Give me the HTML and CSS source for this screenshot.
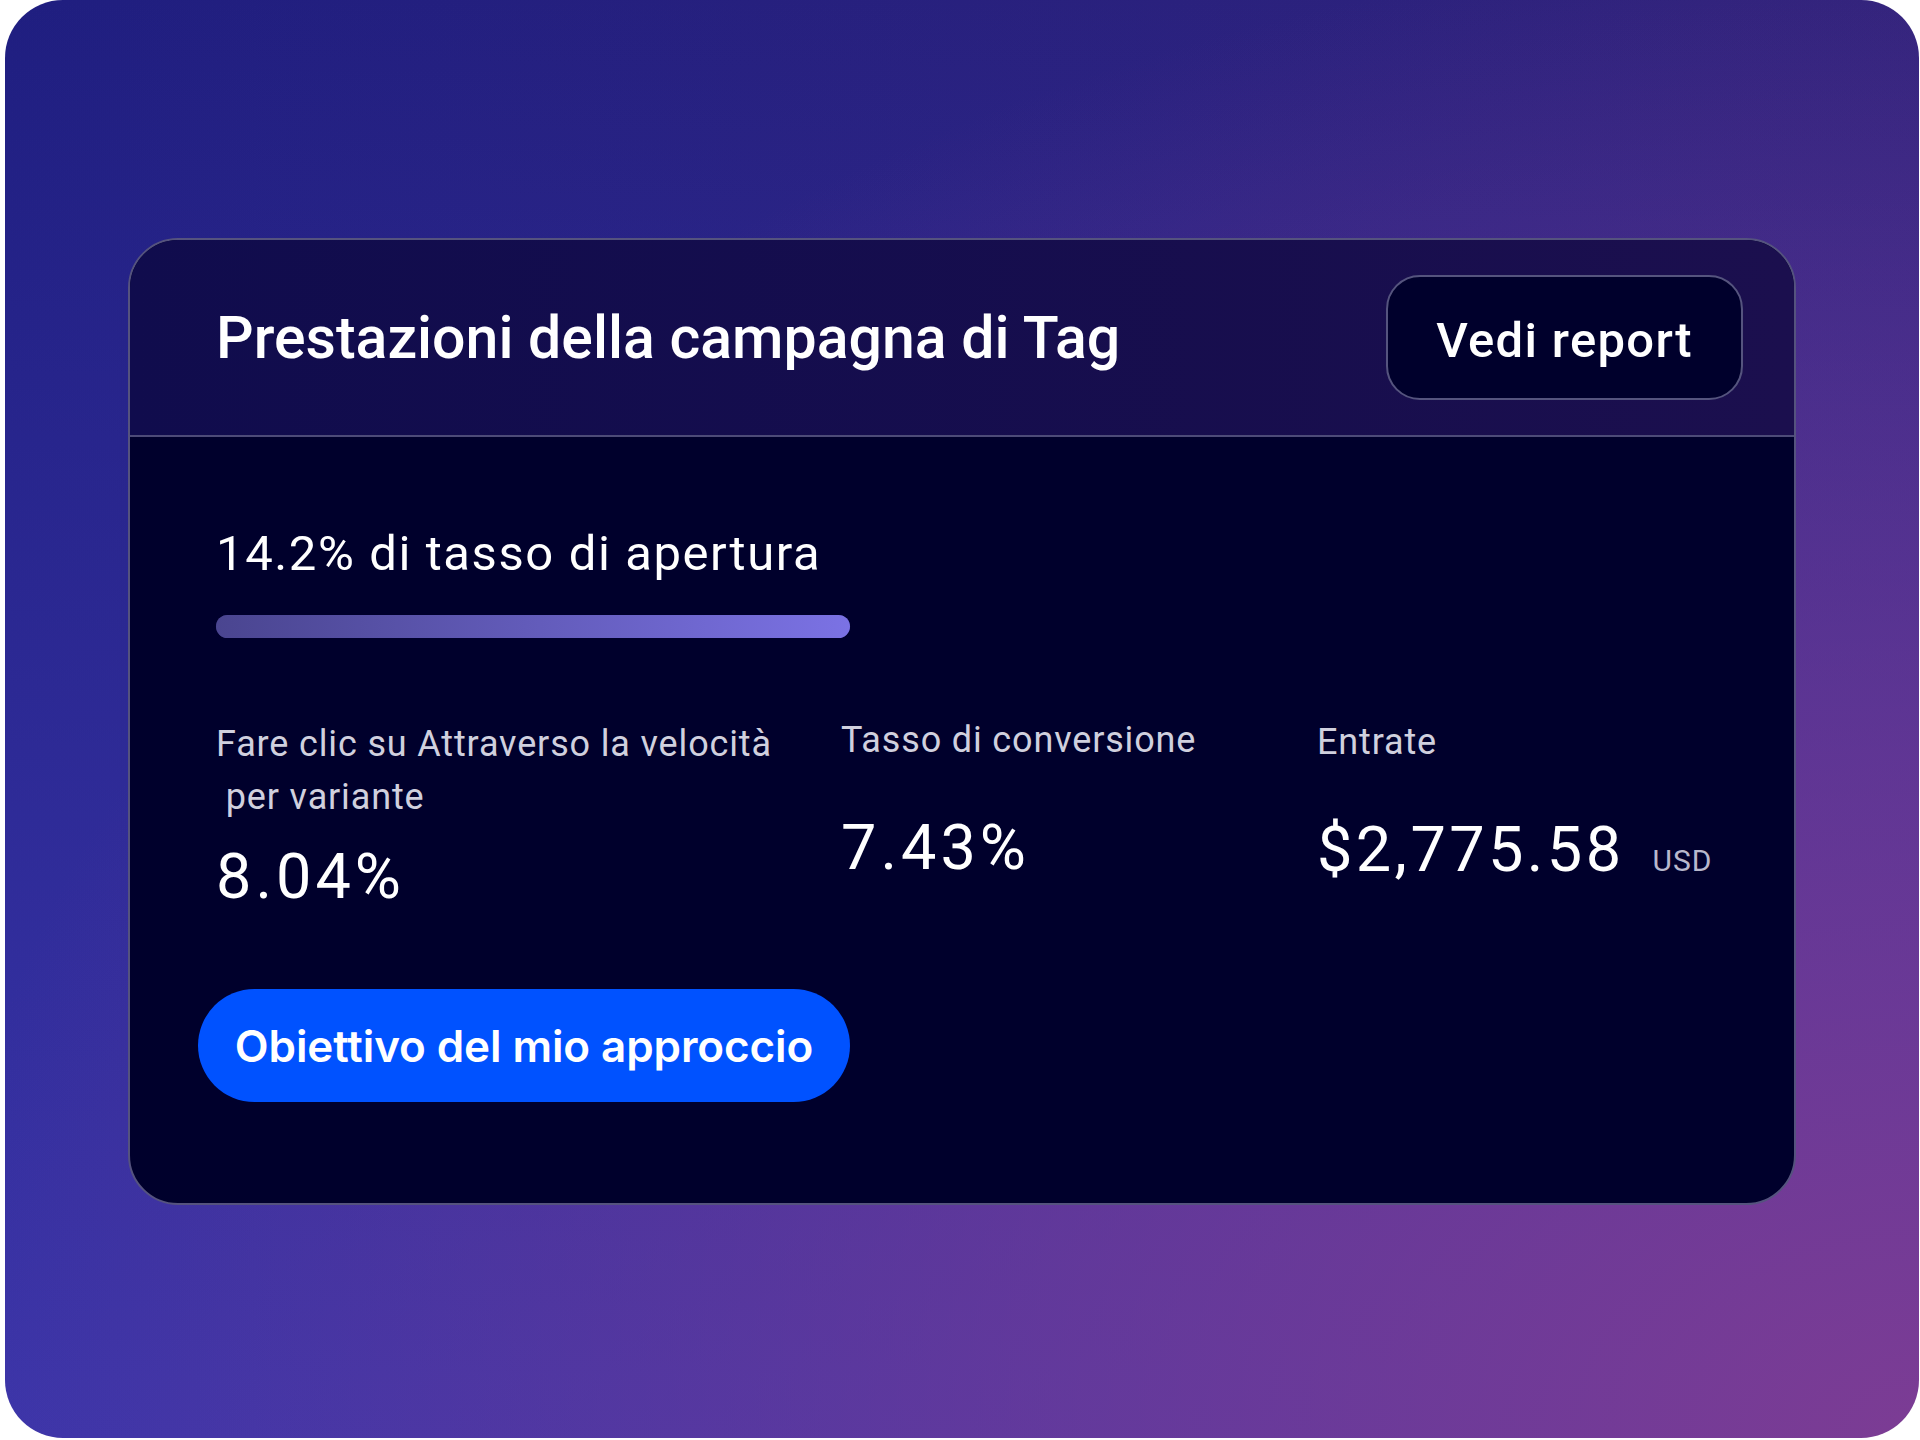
FILE: index.html
```html
<!DOCTYPE html>
<html lang="it">
<head>
  <meta charset="UTF-8" />
  <meta name="viewport" content="width=device-width, initial-scale=1.0"/>
  <title>Prestazioni della campagna</title>
  <link rel="stylesheet" href="styles.css">
</head>
<body>

  <div class="frame">
    <div class="card">
      <header class="card-head">
        <h1 class="card-title">Prestazioni della campagna di Tag</h1>
        <button class="report-btn">Vedi report</button>
      </header>

      <section class="card-body">
        <p class="open-rate">14.2% di tasso di apertura</p>
        <div class="bar">
          <div class="bar-fill" style="width: 100%"></div>
        </div>

        <div class="stats">
          <div class="stat stat-click">
            <div class="stat-label">Fare clic su Attraverso la velocità<br>&nbsp;per variante</div>
            <div class="stat-value">8.04%</div>
          </div>
          <div class="stat stat-conv">
            <div class="stat-label">Tasso di conversione</div>
            <div class="stat-value">7.43%</div>
          </div>
          <div class="stat stat-rev">
            <div class="stat-label">Entrate</div>
            <div class="stat-value">$2,775.58<span class="currency">USD</span></div>
          </div>
        </div>

        <button class="goal-btn">Obiettivo del mio approccio</button>
      </section>
    </div>
  </div>

</body>
</html>
```

FILE: styles.css
```css
* {
  margin: 0;
  padding: 0;
  box-sizing: border-box;
  font-family: 'Roboto', 'Liberation Sans', sans-serif;
}

body {
  background: #fff;
  width: 1920px;
  height: 1440px;
  overflow: hidden;
}

.frame {
  margin-left: 5px;
  width: 1914px;
  height: 1438px;
  border-radius: 58px;
  padding-top: 238px;
  display: flex;
  justify-content: center;
  align-items: flex-start;
  background:
    radial-gradient(2000px 1500px at 100% 100%, rgba(124, 60, 148, 1) 0%, rgba(124, 60, 148, 0.6) 45%, rgba(124, 60, 148, 0) 100%),
    linear-gradient(to bottom, rgba(58, 53, 170, 0) 0%, rgba(58, 53, 170, 1) 100%),
    linear-gradient(to right, #1f1e80 0%, #31237c 100%);
}

.card {
  width: 1668px;
  border: 2px solid #55537e;
  border-radius: 50px;
  overflow: hidden;
  background: #00002c;
  color: #fff;
}

.card-head {
  height: 197px;
  padding: 0 51px 0 86px;
  display: flex;
  justify-content: space-between;
  align-items: center;
  background: linear-gradient(to right, #100c4d, #1b0f4e);
  border-bottom: 2px solid #4d4b78;
}

.card-title {
  font-size: 59px;
  font-weight: 500;
  line-height: 1;
}

.report-btn {
  width: 357px;
  height: 125px;
  padding-top: 5px;
  background: #00002c;
  color: #fff;
  border: 2px solid #55547e;
  border-radius: 34px;
  font-size: 49px;
  font-weight: 500;
  letter-spacing: 1.3px;
  cursor: pointer;
}

.card-body {
  padding: 92px 86px 101px;
}

.open-rate {
  font-size: 49px;
  line-height: 1;
  letter-spacing: 1.6px;
}

.bar {
  margin-top: 37px;
  width: 634px;
  height: 23px;
  border-radius: 12px;
  background: #25236a;
}

.bar-fill {
  height: 100%;
  border-radius: 12px;
  background: linear-gradient(to right, #4a4590, #7b72e4);
}

.stats {
  margin-top: 76px;
  display: grid;
  grid-template-columns: 625px 476px 1fr;
  align-items: start;
}

.stat-label {
  font-size: 36px;
  line-height: 53px;
  letter-spacing: 0.85px;
  color: #d0d0de;
  margin-bottom: 49px;
}

.stat-click {
  margin-top: 4px;
}

.stat-click .stat-label {
  margin-bottom: 21px;
}

.stat-rev {
  margin-top: 2px;
}

.stat-value {
  font-size: 63px;
  line-height: 1;
  letter-spacing: 4px;
}

.stat-rev .stat-value {
  letter-spacing: 3.4px;
}

.currency {
  font-size: 30px;
  letter-spacing: 1px;
  color: #b8b8cc;
  margin-left: 28px;
}

.goal-btn {
  margin-top: 81px;
  margin-left: -18px;
  width: 652px;
  height: 113px;
  border: none;
  border-radius: 57px;
  background: #0052ff;
  color: #fff;
  font-family: 'Inter', 'Roboto', sans-serif;
  font-size: 44px;
  font-weight: 600;
  letter-spacing: -0.1px;
  cursor: pointer;
}
```
